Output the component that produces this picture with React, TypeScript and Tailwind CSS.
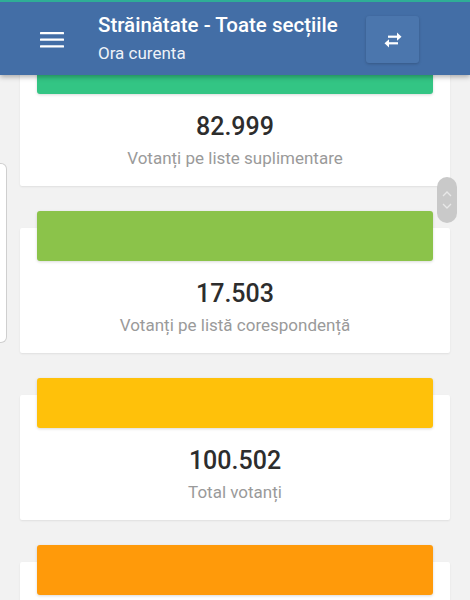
import React from 'react';

interface Stat {
  value?: string;
  label?: string;
  color: string;
}

const stats: Stat[] = [
  { value: '82.999', label: 'Votanți pe liste suplimentare', color: 'bg-[#33c584]' },
  { value: '17.503', label: 'Votanți pe listă corespondență', color: 'bg-[#8bc34a]' },
  { value: '100.502', label: 'Total votanți', color: 'bg-[#ffc10a]' },
  { color: 'bg-[#ff9a0a]' },
];

const MenuIcon = () => (
  <svg width="26" height="18" viewBox="0 0 26 18" fill="#fff">
    <rect x="0" y="1" width="24" height="2.2" rx="0.5" />
    <rect x="0" y="7.6" width="24" height="2.2" rx="0.5" />
    <rect x="0" y="14.2" width="24" height="2.2" rx="0.5" />
  </svg>
);

const SwapIcon = () => (
  <svg width="22" height="18" viewBox="0 0 22 18" fill="#fff">
    {/* right arrow */}
    <rect x="6" y="4.6" width="10" height="2.2" />
    <path d="M15 1.6 L19.5 5.7 L15 9.8 Z" />
    {/* left arrow */}
    <rect x="6" y="11.2" width="10" height="2.2" />
    <path d="M7 8.2 L2.5 12.3 L7 16.4 Z" />
  </svg>
);

const StatCard: React.FC<{ stat: Stat }> = ({ stat }) => (
  <div className="flex flex-col min-h-[90px] bg-white rounded-[2px] shadow-[0_1px_2px_rgba(0,0,0,0.08)]">
    <div className={`-mt-[17px] mx-[17px] h-[50px] rounded-[3px] shadow-[0_1px_3px_rgba(0,0,0,0.15)] ${stat.color}`} />
    {stat.value && (
      <>
        <div className="mt-[17px] text-center text-[25px] leading-[32px] font-medium text-[#2d2d2d]">{stat.value}</div>
        <div className="mt-[3px] mb-[16px] text-center text-[17px] leading-[24px] text-[#9a9a9a]">{stat.label}</div>
      </>
    )}
  </div>
);

export default function App() {
  return (
    <div className="relative w-[470px] h-[600px] overflow-hidden bg-[#f2f2f2] font-['Roboto',sans-serif]">
      <div className="flex flex-col gap-[42px] px-5 pt-[61px]">
        {stats.map((s, i) => (
          <StatCard key={`stat-${i}`} stat={s} />
        ))}
      </div>

      {/* left drawer tab */}
      <div className="absolute left-0 top-[163px] w-[7px] h-[180px] bg-white border border-l-0 border-[#cfcfcf] rounded-r-[6px]" />

      {/* scroll buttons */}
      <div className="absolute left-[437px] top-[177px] w-[20px] h-[46px] rounded-full bg-[#c9c9c9] flex flex-col items-center justify-center gap-[6px]">
        <svg width="10" height="6" viewBox="0 0 10 6" fill="none" stroke="#e8e8e8" strokeWidth="1.3">
          <path d="M1 5 L5 1 L9 5" />
        </svg>
        <svg width="10" height="6" viewBox="0 0 10 6" fill="none" stroke="#e8e8e8" strokeWidth="1.3">
          <path d="M1 1 L5 5 L9 1" />
        </svg>
      </div>

      {/* header */}
      <div className="absolute top-0 left-0 right-0 shadow-[0_2px_5px_rgba(0,0,0,0.3)]">
        <div className="h-[2px] bg-[#2fae96]" />
        <div className="h-[73px] bg-[#436ea6] flex items-center">
          <div className="w-[98px] flex justify-start pl-[40px] pt-[2px]">
            <MenuIcon />
          </div>
          <div className="flex-1 flex flex-col text-white">
            <div className="text-[20.5px] leading-[24px] font-medium -mt-[1px]">Străinătate - Toate secțiile</div>
            <div className="text-[17px] leading-[22px] mt-[5px] text-[#eef2f8]">Ora curenta</div>
          </div>
          <div className="mr-[51px] w-[53px] h-[47px] mt-[2px] rounded-[3px] bg-[#4b76ad] shadow-[0_1px_3px_rgba(0,0,0,0.2)] flex items-center justify-center">
            <SwapIcon />
          </div>
        </div>
      </div>
    </div>
  );
}
